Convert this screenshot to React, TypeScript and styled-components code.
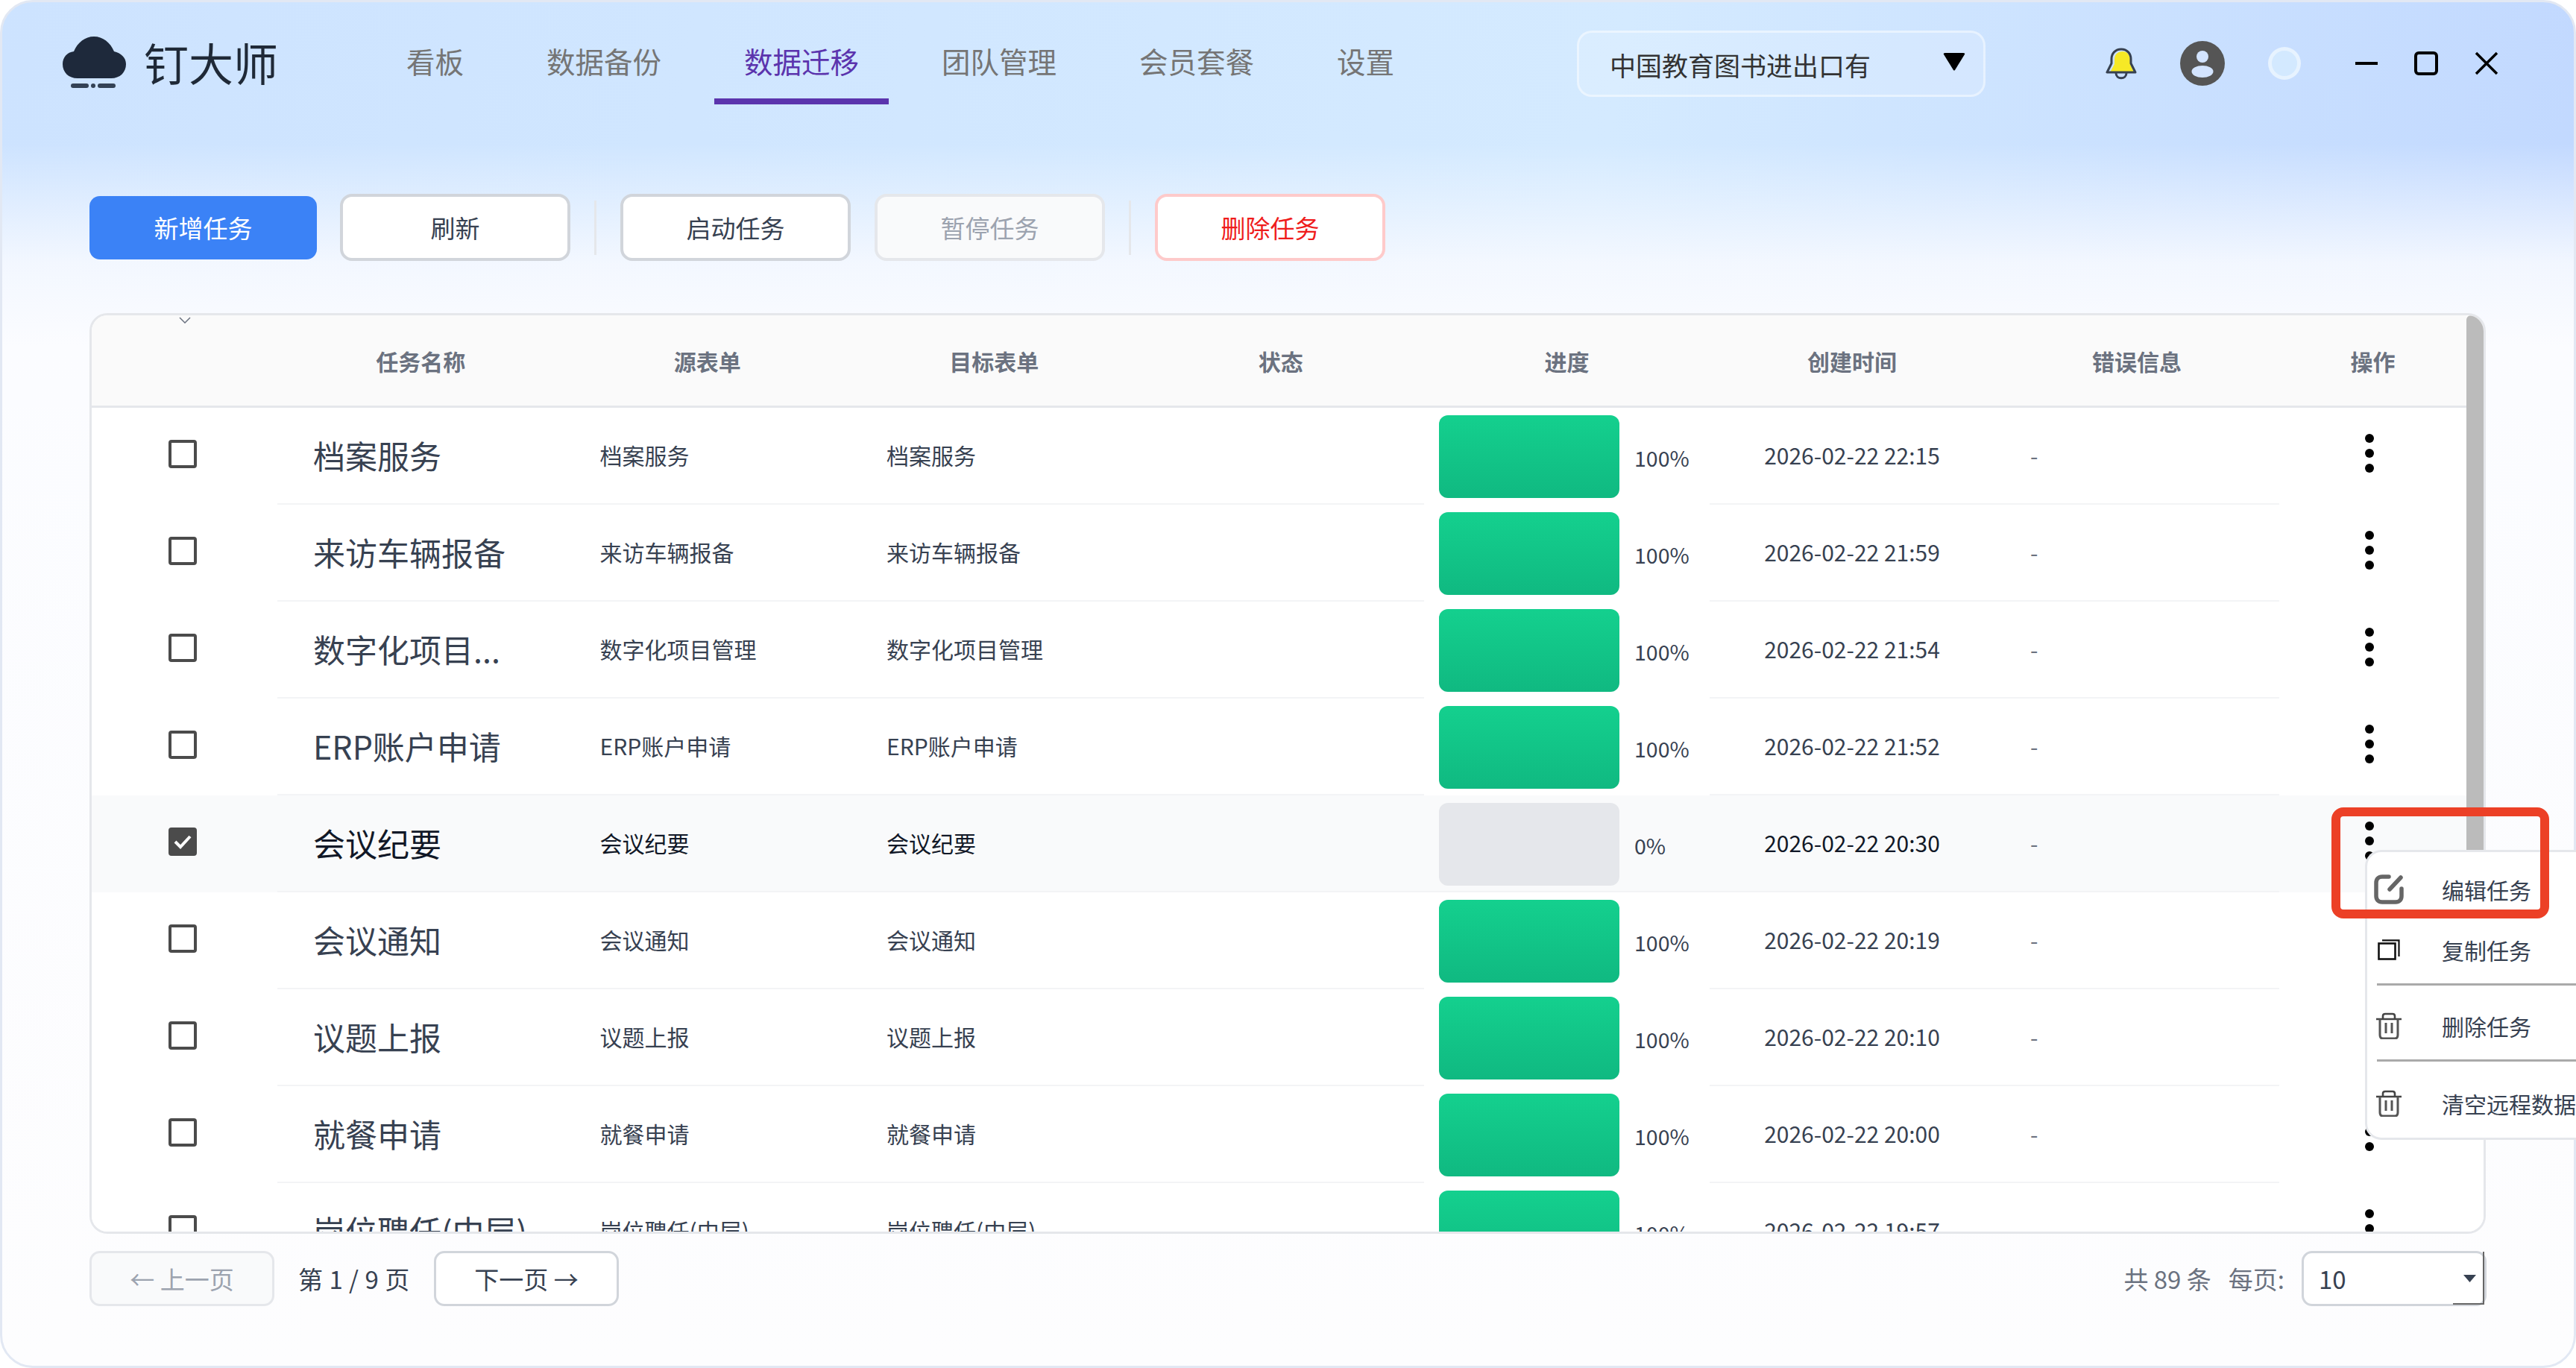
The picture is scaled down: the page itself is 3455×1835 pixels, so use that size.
import styled, { createGlobalStyle } from "styled-components";

const GlobalStyle = createGlobalStyle`
  html, body {
    margin: 0;
    padding: 0;
    width: 3455px;
    height: 1835px;
    overflow: hidden;
    background: #ffffff;
    font-family: "Noto Sans CJK SC", "Noto Sans", sans-serif;
  }
  * {
    box-sizing: border-box;
  }
`;

type Task = {
  name: string;
  form: string;
  progress: number;
  time: string;
};

const tasks: Task[] = [
  { name: "档案服务", form: "档案服务", progress: 100, time: "2026-02-22 22:15" },
  { name: "来访车辆报备", form: "来访车辆报备", progress: 100, time: "2026-02-22 21:59" },
  { name: "数字化项目...", form: "数字化项目管理", progress: 100, time: "2026-02-22 21:54" },
  { name: "ERP账户申请", form: "ERP账户申请", progress: 100, time: "2026-02-22 21:52" },
  { name: "会议纪要", form: "会议纪要", progress: 0, time: "2026-02-22 20:30" },
  { name: "会议通知", form: "会议通知", progress: 100, time: "2026-02-22 20:19" },
  { name: "议题上报", form: "议题上报", progress: 100, time: "2026-02-22 20:10" },
  { name: "就餐申请", form: "就餐申请", progress: 100, time: "2026-02-22 20:00" },
  { name: "岗位聘任(中层)", form: "岗位聘任(中层)", progress: 100, time: "2026-02-22 19:57" },
];

const navItems = ["看板", "数据备份", "数据迁移", "团队管理", "会员套餐", "设置"];

function App() {
  return (
    <Window>
      <GlobalStyle />
      <Header>
        <Brand>
          <CloudLogo />
          <BrandName>钉大师</BrandName>
        </Brand>
        <Nav>
          {navItems.map((item) => (
            <NavItem key={item} $active={item === "数据迁移"}>
              {item}
            </NavItem>
          ))}
        </Nav>
        <HeaderRight>
          <CompanySelect>
            <span>中国教育图书进出口有</span>
            <svg width="30" height="24" viewBox="0 0 30 24">
              <path d="M1 2Q0 0 3 0H27Q30 0 29 2L16 23Q15 24 14 23Z" fill="#000" />
            </svg>
          </CompanySelect>
          <BellIcon />
          <AvatarSlot>
            <AvatarIcon />
          </AvatarSlot>
          <StatusDot />
          <WindowControls>
            <svg width="30" height="6" viewBox="0 0 30 6">
              <rect width="30" height="4" y="1" fill="#000" />
            </svg>
            <svg width="32" height="32" viewBox="0 0 32 32">
              <rect x="2" y="2" width="28" height="28" rx="4" fill="none" stroke="#000" strokeWidth="4" />
            </svg>
            <svg width="32" height="32" viewBox="0 0 32 32">
              <path d="M2 2L30 30M30 2L2 30" stroke="#000" strokeWidth="3.5" />
            </svg>
          </WindowControls>
        </HeaderRight>
      </Header>

      <Toolbar>
        <PrimaryButton>新增任务</PrimaryButton>
        <ToolButton>刷新</ToolButton>
        <ToolDivider />
        <ToolButton>启动任务</ToolButton>
        <ToolButton $disabled>暂停任务</ToolButton>
        <ToolDivider />
        <ToolButton $danger>删除任务</ToolButton>
      </Toolbar>

      <TableFrame>
        <Table>
          <HeadRow>
            <HeadCell>
              <SortChevron width="16" height="9" viewBox="0 0 16 9">
                <path d="M1 1L8 8L15 1" fill="none" stroke="#6b7280" strokeWidth="1.5" />
              </SortChevron>
            </HeadCell>
            <HeadCell>任务名称</HeadCell>
            <HeadCell>源表单</HeadCell>
            <HeadCell>目标表单</HeadCell>
            <HeadCell>状态</HeadCell>
            <HeadCell>进度</HeadCell>
            <HeadCell>创建时间</HeadCell>
            <HeadCell>错误信息</HeadCell>
            <HeadCell>操作</HeadCell>
          </HeadRow>
          {tasks.map((task) => (
            <TaskRow key={task.time} task={task} selected={task.progress === 0} />
          ))}
        </Table>
        <ScrollTrack>
          <ScrollThumb />
        </ScrollTrack>
      </TableFrame>

      <Pagination>
        <PageLeft>
          <PageButton $disabled>← 上一页</PageButton>
          <PageInfo>第 1 / 9 页</PageInfo>
          <PageButton>下一页 →</PageButton>
        </PageLeft>
        <PageRight>
          <PageTotal>共 89 条</PageTotal>
          <PageTotal>每页:</PageTotal>
          <SizeSelect>
            10
            <svg width="17" height="10" viewBox="0 0 17 10">
              <path d="M0 0H17L8.5 10Z" fill="#374151" />
            </svg>
          </SizeSelect>
        </PageRight>
      </Pagination>

      <ActionMenu>
        <MenuItem>
          <MenuIcon>
            <EditIcon />
          </MenuIcon>
          编辑任务
        </MenuItem>
        <MenuItem $tail>
          <MenuIcon>
            <CopyIcon />
          </MenuIcon>
          复制任务
        </MenuItem>
        <MenuItem $divided>
          <MenuIcon>
            <TrashIcon />
          </MenuIcon>
          删除任务
        </MenuItem>
        <MenuItem $divided $last>
          <MenuIcon>
            <TrashIcon />
          </MenuIcon>
          清空远程数据
        </MenuItem>
      </ActionMenu>
      <Annotation />
    </Window>
  );
}

function TaskRow({ task, selected }: { task: Task; selected: boolean }) {
  return (
    <Row $selected={selected}>
      <CheckCell>
        <Checkbox $checked={selected}>
          {selected && (
            <svg width="26" height="22" viewBox="0 0 26 22">
              <path d="M3 11L10 18L23 4" fill="none" stroke="#fff" strokeWidth="4" />
            </svg>
          )}
        </Checkbox>
      </CheckCell>
      <NameCell $selected={selected}>{task.name}</NameCell>
      <TextCell $selected={selected}>{task.form}</TextCell>
      <TextCell $selected={selected}>{task.form}</TextCell>
      <TextCell $selected={selected} />
      <ProgressCell $selected={selected}>
        <ProgressBar $done={task.progress === 100} />
        <Percent>{task.progress}%</Percent>
      </ProgressCell>
      <TimeCell $selected={selected}>{task.time}</TimeCell>
      <ErrorCell>-</ErrorCell>
      <ActionCell>
        <Kebab>
          <i />
          <i />
          <i />
        </Kebab>
      </ActionCell>
    </Row>
  );
}

function CloudLogo() {
  return (
    <svg width="85" height="69" viewBox="0 0 85 69">
      <path
        d="M20 56C8 56 0 48 0 37C0 28 6 21 15 20C20 8 30 0 42 0C54 0 64 8 69 20C78 22 85 28 85 37C85 48 77 56 65 56Z"
        fill="#1e293b"
      />
      <rect x="11" y="63" width="24" height="6" rx="3" fill="#334155" />
      <circle cx="41" cy="66" r="3" fill="#334155" />
      <rect x="47" y="63" width="24" height="6" rx="3" fill="#334155" />
    </svg>
  );
}

function BellIcon() {
  return (
    <svg width="42" height="44" viewBox="0 0 42 44">
      <path d="M23 6C16 6 12 10 12 17V23L6 34H38L33 23V16C32 10 29 6 23 6Z" fill="#f6e926" />
      <path
        d="M21 3C13 3 8 9 8 16V22L2 34H40L34 22V16C34 9 29 3 21 3Z"
        fill="none"
        stroke="#374151"
        strokeWidth="3"
        strokeLinejoin="round"
      />
      <path d="M14 35C14 44 28 44 28 35" fill="none" stroke="#374151" strokeWidth="3" />
    </svg>
  );
}

function AvatarIcon() {
  return (
    <svg width="60" height="60" viewBox="0 0 60 60">
      <circle cx="30" cy="30" r="30" fill="#555555" />
      <circle cx="30" cy="21" r="8" fill="#d3e4ff" />
      <ellipse cx="30" cy="41" rx="14.5" ry="8" fill="#d3e4ff" />
    </svg>
  );
}

function EditIcon() {
  return (
    <svg width="40" height="40" viewBox="0 0 40 40">
      <path
        d="M20 3H11C6 3 3 6 3 11V29C3 34 6 37 11 37H29C34 37 37 34 37 29V19"
        fill="none"
        stroke="#666"
        strokeWidth="5.5"
        strokeLinecap="round"
      />
      <path d="M21 20L36 4" fill="none" stroke="#666" strokeWidth="5.5" strokeLinecap="round" />
    </svg>
  );
}

function CopyIcon() {
  return (
    <svg width="30" height="28" viewBox="0 0 30 28">
      <rect x="1.5" y="5.5" width="22" height="21" fill="none" stroke="#111" strokeWidth="2.6" />
      <path d="M6 1.3H28.5V23" fill="none" stroke="#111" strokeWidth="2.2" />
    </svg>
  );
}

function TrashIcon() {
  return (
    <svg width="36" height="36" viewBox="0 0 36 36">
      <path d="M1 9H35" stroke="#444" strokeWidth="2.6" />
      <path d="M10 8V5C10 3 11 2 13 2H23C25 2 26 3 26 5V8" fill="none" stroke="#444" strokeWidth="2.6" />
      <path
        d="M6 9V30C6 33 7 35 10 35H26C29 35 30 33 30 30V9"
        fill="none"
        stroke="#555"
        strokeWidth="3"
      />
      <path d="M14 14V28M22 14V28" stroke="#555" strokeWidth="3" />
    </svg>
  );
}

const Window = styled.div`
  position: relative;
  width: 3455px;
  height: 1835px;
  border: 3px solid #e2e8f3;
  border-radius: 44px;
  background:
    linear-gradient(
      180deg,
      rgba(252, 252, 255, 0) 0,
      rgba(252, 252, 255, 0) 190px,
      rgba(246, 249, 255, 0.92) 350px,
      #fbfcff 460px,
      #fdfdfe 100%
    ),
    linear-gradient(100deg, #cde3ff 0, #d4eaff 58%, #bed5ff 100%);
`;

const Header = styled.header`
  display: flex;
  align-items: center;
  height: 137px;
  padding: 27px 101px 0 81px;
`;

const Brand = styled.div`
  display: flex;
  align-items: center;
  gap: 24px;
  width: 421px;
  margin-bottom: 4px;
`;

const BrandName = styled.div`
  font-size: 60px;
  line-height: 1;
  color: #1f2937;
`;

const Nav = styled.nav`
  display: flex;
  gap: 31px;
  align-self: stretch;
  margin-top: -27px;
  padding-top: 30px;
`;

const NavItem = styled.div<{ $active?: boolean }>`
  display: flex;
  align-items: center;
  padding: 0 40px 4px;
  font-size: 38.5px;
  color: ${(p) => (p.$active ? "#5b34ad" : "#757575")};
  border-bottom: 8px solid ${(p) => (p.$active ? "#5b34ad" : "transparent")};
`;

const HeaderRight = styled.div`
  display: flex;
  align-items: center;
  margin-left: auto;
`;

const CompanySelect = styled.div`
  display: flex;
  align-items: center;
  justify-content: space-between;
  width: 548px;
  height: 89px;
  padding: 0 24px 0 41px;
  margin-right: 161px;
  border: 3px solid rgba(255, 255, 255, 0.45);
  border-radius: 20px;
  background: rgba(255, 255, 255, 0.14);
  font-size: 35px;
  color: #333333;

  span {
    padding-top: 2px;
  }
  svg {
    margin-top: -4px;
  }
`;

const AvatarSlot = styled.div`
  display: flex;
  margin-left: 58px;
`;

const StatusDot = styled.div`
  width: 44px;
  height: 44px;
  margin-left: 58px;
  border: 5px solid rgba(255, 255, 255, 0.45);
  border-radius: 50%;
  background: #d3e9ff;
`;

const WindowControls = styled.div`
  display: flex;
  align-items: center;
  gap: 49px;
  margin-left: 73px;
`;

const Toolbar = styled.div`
  display: flex;
  align-items: center;
  gap: 32px;
  height: 90px;
  margin-top: 120px;
  padding-left: 117px;
`;

const PrimaryButton = styled.button`
  width: 305px;
  height: 85px;
  margin-right: -1px;
  padding: 0;
  border: none;
  border-radius: 14px;
  background: #3b82f6;
  color: #ffffff;
  font: inherit;
  font-size: 33px;
`;

const ToolButton = styled.button<{ $disabled?: boolean; $danger?: boolean }>`
  width: 309px;
  height: 90px;
  padding: 0;
  border: 4px solid ${(p) => (p.$disabled ? "#e5e7eb" : p.$danger ? "#fecaca" : "#d1d5db")};
  border-radius: 16px;
  background: ${(p) => (p.$disabled ? "#f9fafb" : "#ffffff")};
  color: ${(p) => (p.$disabled ? "#9ca3af" : p.$danger ? "#ef1c1c" : "#374151")};
  font: inherit;
  font-size: 33px;
`;

const ToolDivider = styled.div`
  width: 3px;
  height: 73px;
  background: #e5e7eb;
`;

const TableFrame = styled.div`
  display: flex;
  width: 3214px;
  height: 1235px;
  margin: 70px 0 0 117px;
  overflow: hidden;
  border: 3px solid #e5e7eb;
  border-radius: 24px;
  background: #ffffff;
`;

const Table = styled.div`
  flex: 1;
  overflow: hidden;
`;

const columns = "249px 384.5px 384.5px 384.5px 384.5px 383px 382px 382px 251px";

const HeadRow = styled.div`
  display: grid;
  grid-template-columns: ${columns};
  height: 124px;
  background: #fafafa;
  border-bottom: 3px solid #e5e7eb;
`;

const HeadCell = styled.div`
  display: flex;
  align-items: center;
  justify-content: center;
  font-size: 30px;
  font-weight: 700;
  color: #6b7280;
`;

const SortChevron = styled.svg`
  align-self: flex-start;
  margin-top: 2px;
`;

const Row = styled.div<{ $selected: boolean }>`
  display: grid;
  grid-template-columns: ${columns};
  grid-template-rows: 130px;
  height: 130px;
  background: ${(p) => (p.$selected ? "#f9fafb" : "#ffffff")};
`;

const CheckCell = styled.div`
  display: flex;
  align-items: center;
  padding: 0 0 6px 103px;
`;

const Checkbox = styled.div<{ $checked: boolean }>`
  display: flex;
  align-items: center;
  justify-content: center;
  width: 38px;
  height: 38px;
  border: 4px solid #4b4b4b;
  border-radius: 4px;
  background: ${(p) => (p.$checked ? "#4b4b4b" : "#ffffff")};
`;

const TextCell = styled.div<{ $selected?: boolean }>`
  display: flex;
  align-items: center;
  padding: 0 0 2px 48px;
  border-bottom: 2px solid #f3f4f6;
  font-size: 30px;
  color: ${(p) => (p.$selected ? "#111827" : "#374151")};
  white-space: nowrap;
`;

const NameCell = styled(TextCell)`
  font-size: 43px;
`;

const TimeCell = styled(TextCell)`
  justify-content: center;
  padding-left: 0;
`;

const ErrorCell = styled(TextCell)`
  padding-left: 48px;
  color: #6b7280;
`;

const ProgressCell = styled.div<{ $selected: boolean }>`
  display: flex;
  align-items: center;
  gap: 20px;
  padding: 10px 0 7px 20px;
  border-bottom: 2px solid ${(p) => (p.$selected ? "#f3f4f6" : "transparent")};
`;

const ProgressBar = styled.div<{ $done: boolean }>`
  width: 242px;
  height: 111px;
  flex: none;
  border-radius: 12px;
  background: ${(p) => (p.$done ? "linear-gradient(180deg, #14d08e, #10b981)" : "#e5e7eb")};
`;

const Percent = styled.span`
  margin-top: 2px;
  font-size: 28.5px;
  color: #374151;
`;

const ActionCell = styled.div`
  display: flex;
  align-items: center;
  justify-content: center;
  padding: 0 10px 8px 0;
`;

const Kebab = styled.div`
  display: flex;
  flex-direction: column;
  gap: 8px;

  i {
    display: block;
    width: 12px;
    height: 12px;
    border-radius: 50%;
    background: #000000;
  }
`;

const ScrollTrack = styled.div`
  width: 23px;
  flex: none;
  background: #ffffff;
`;

const ScrollThumb = styled.div`
  height: 800px;
  border-radius: 6px;
  background: #bbbbbb;
`;

const Pagination = styled.div`
  display: flex;
  justify-content: space-between;
  align-items: center;
  margin-top: 23px;
  padding: 0 117px 0 117px;
`;

const PageLeft = styled.div`
  display: flex;
  align-items: center;
  gap: 32px;
`;

const PageButton = styled.button<{ $disabled?: boolean }>`
  width: 248px;
  height: 74px;
  padding: 0;
  border: 3px solid ${(p) => (p.$disabled ? "#e5e7eb" : "#d1d5db")};
  border-radius: 14px;
  background: ${(p) => (p.$disabled ? "#f9fafb" : "#ffffff")};
  color: ${(p) => (p.$disabled ? "#9ca3af" : "#374151")};
  font: inherit;
  font-size: 33px;
`;

const PageInfo = styled.span`
  min-width: 150px;
  font-size: 33px;
  color: #374151;
  word-spacing: 1px;
`;

const PageRight = styled.div`
  display: flex;
  align-items: center;
  gap: 23px;
`;

const PageTotal = styled.span`
  font-size: 33px;
  color: #6b7280;
`;

const SizeSelect = styled.div`
  position: relative;
  display: flex;
  align-items: center;
  justify-content: space-between;
  width: 248px;
  height: 74px;
  padding: 0 11px 0 20px;
  border: 3px solid #d1d5db;
  border-radius: 14px;
  background: #ffffff;
  font-size: 33px;
  color: #374151;

  &::after {
    content: "";
    position: absolute;
    right: 0;
    bottom: -1px;
    width: 40px;
    height: 69px;
    border-right: 2px solid #666;
    border-bottom: 2px solid #666;
  }
`;

const ActionMenu = styled.div`
  position: absolute;
  left: 3169px;
  top: 1137px;
  width: 290px;
  height: 389px;
  padding-top: 9px;
  border: 3px solid #e5e7eb;
  border-right: none;
  border-radius: 22px 0 0 22px;
  background: #ffffff;
`;

const MenuItem = styled.div<{ $divided?: boolean; $tail?: boolean; $last?: boolean }>`
  display: flex;
  align-items: center;
  gap: 55px;
  height: ${(p) => (p.$last ? "104px" : p.$divided ? "102px" : p.$tail ? "86px" : "81px")};
  margin-left: 13px;
  padding-top: ${(p) => (p.$last ? "10px" : p.$divided ? "8px" : "0")};
  padding-bottom: ${(p) => (p.$tail ? "5px" : "0")};
  border-top: ${(p) => (p.$divided ? "3px solid #aaaaaa" : "none")};
  font-size: 30px;
  color: #374151;
  white-space: nowrap;
`;

const MenuIcon = styled.span`
  display: flex;
  justify-content: center;
  width: 32px;

  svg {
    flex: none;
  }
`;

const Annotation = styled.div`
  position: absolute;
  left: 3124px;
  top: 1080px;
  width: 292px;
  height: 149px;
  border: 12px solid #ec4026;
  border-radius: 16px;
`;

export default App;
